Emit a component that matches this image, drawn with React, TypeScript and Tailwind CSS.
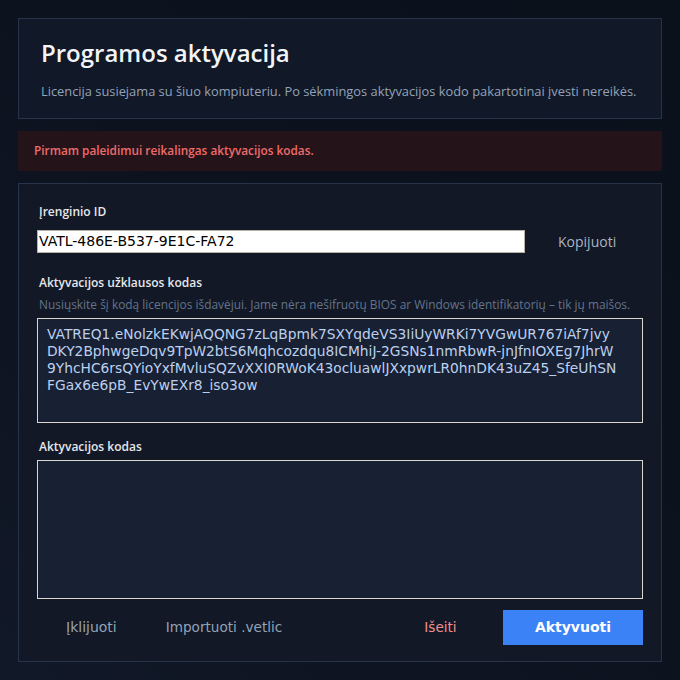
const requestCode = [
  'VATREQ1.eNolzkEKwjAQQNG7zLqBpmk7SXYqdeVS3IiUyWRKi7YVGwUR767iAf7jvy',
  'DKY2BphwgeDqv9TpW2btS6Mqhcozdqu8ICMhiJ-2GSNs1nmRbwR-jnJfnIOXEg7JhrW',
  '9YhcHC6rsQYioYxfMvluSQZvXXI0RWoK43ocluawlJXxpwrLR0hnDK43uZ45_SfeUhSN',
  'FGax6e6pB_EvYwEXr8_iso3ow',
];

export default function App() {
  return (
    <div className="w-[680px] h-[680px] bg-gradient-to-tr from-[#111827] via-[#0c121e] to-[#0b111b] p-[18px] flex flex-col gap-3 font-['Open_Sans',sans-serif]">
      <div className="border border-[#263349] bg-[#111827] px-[22px] pt-[18px] pb-[17px]">
        <h1 className="text-[24px] font-semibold text-[#f3f4f6] leading-8">Programos aktyvacija</h1>
        <p className="mt-[12px] text-[12.85px] text-[#94a3b8] leading-5">
          Licencija susiejama su šiuo kompiuteriu. Po sėkmingos aktyvacijos kodo pakartotinai įvesti nereikės.
        </p>
      </div>

      <div className="h-10 bg-[#241419] flex items-center px-4">
        <span className="text-[11.8px] font-semibold text-[#ef6b6b]">Pirmam paleidimui reikalingas aktyvacijos kodas.</span>
      </div>

      <div className="flex-1 border border-[#263349] bg-[#121826] px-[18px] pt-[18px] flex flex-col">
        <label className="text-[12px] font-semibold text-[#e5e7eb] px-[2px] leading-5">Įrenginio ID</label>
        <div className="flex items-center mt-[8px]">
          <div className="w-[488px] h-[23px] bg-white border border-[#b8b2a4] flex items-center px-[1px]">
            <span className="font-['DejaVu_Sans',sans-serif] text-[14px] text-black">VATL-486E-B537-9E1C-FA72</span>
          </div>
          <button className="ml-[33px] text-[14px] text-[#aab4c3]">Kopijuoti</button>
        </div>

        <label className="mt-[20px] text-[12px] font-semibold text-[#e5e7eb] px-[2px] leading-5">Aktyvacijos užklausos kodas</label>
        <p className="mt-[1px] text-[11.9px] text-[#64748b] px-[2px] leading-5">
          Nusiųskite šį kodą licencijos išdavėjui. Jame nėra nešifruotų BIOS ar Windows identifikatorių – tik jų maišos.
        </p>
        <div className="mt-[4px] h-[105px] bg-[#182033] border border-[#d9d6cc] px-[9px] pt-[7px] font-['DejaVu_Sans',sans-serif] text-[13.8px] leading-[17px] text-[#bcd0ee]">
          {requestCode.map((l) => (
            <div key={l}>{l}</div>
          ))}
        </div>

        <label className="mt-[14px] text-[12px] font-semibold text-[#e5e7eb] px-[2px] leading-5">Aktyvacijos kodas</label>
        <div className="mt-[3px] h-[139px] bg-[#182033] border border-[#d9d6cc]" />

        <div className="mt-[11px] flex items-center font-['DejaVu_Sans',sans-serif] text-[13.6px]">
          <button className="ml-[29px] text-[14px] text-[#94a3b8]">Įklijuoti</button>
          <button className="ml-[49px] text-[#94a3b8]">Importuoti .vetlic</button>
          <button className="ml-[142px] text-[#f08f8f]">Išeiti</button>
          <button className="ml-auto w-[140px] h-[35px] bg-[#3b82f6] text-white text-[14px] font-bold">Aktyvuoti</button>
        </div>
      </div>
    </div>
  );
}
